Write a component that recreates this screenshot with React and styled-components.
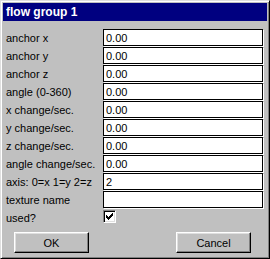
import React from "react";
import styled, { createGlobalStyle } from "styled-components";

const Global = createGlobalStyle`
  html, body { margin: 0; padding: 0; background: #c0c0c0; }
  body { font-family: "Liberation Sans", Arial, sans-serif; }
`;

const Window = styled.div`
  box-sizing: border-box;
  width: 270px;
  height: 259px;
  background: #c0c0c0;
  border: 1px solid;
  border-color: #dfdfdf #000 #000 #dfdfdf;
  box-shadow: inset 1px 1px #fff, inset -1px -1px #808080;
  padding: 2px;
  display: flex;
  flex-direction: column;
`;

const TitleBar = styled.div`
  height: 18px;
  background: #000080;
  color: #fff;
  font: bold 12px "Liberation Sans", Arial, sans-serif;
  display: flex;
  align-items: center;
  padding-left: 3px;
`;

const Form = styled.div`
  display: grid;
  grid-template-columns: 97px 160px;
  grid-auto-rows: 17px;
  row-gap: 1px;
  margin: 8px 0 0 3px;
`;

const Label = styled.label`
  font-size: 11px;
  color: #000;
  display: flex;
  align-items: center;
  white-space: nowrap;
`;

const Field = styled.input`
  box-sizing: border-box;
  width: 160px;
  height: 17px;
  margin: 0;
  border: 1px solid #000;
  box-shadow: 1px 1px 0 #fff;
  background: #fff;
  padding: 0 0 0 2px;
  font: 11px "Liberation Sans", Arial, sans-serif;
  color: #000;
  outline: none;
`;

const CheckCell = styled.div`
  display: flex;
  align-items: flex-start;
  padding-top: 1px;
`;

const CheckBox = styled.div`
  box-sizing: border-box;
  width: 13px;
  height: 13px;
  background: #fff;
  border: 1px solid;
  border-color: #808080 #fff #fff #808080;
  box-shadow: inset 1px 1px #000, inset -1px -1px #dfdfdf;
  display: flex;
  align-items: center;
  justify-content: center;
`;

const Buttons = styled.div`
  display: flex;
  justify-content: space-between;
  padding: 0 16px 0 11px;
  margin-top: 6px;
`;

const Button = styled.button`
  box-sizing: border-box;
  width: 75px;
  height: 21px;
  margin: 0;
  background: #c0c0c0;
  border: 1px solid;
  border-color: #fff #000 #000 #fff;
  box-shadow: inset -1px -1px #808080, inset 1px 1px #dfdfdf;
  font: 11px "Liberation Sans", Arial, sans-serif;
  color: #000;
  padding: 0;
`;

const rows = [
  ["anchor x", "0.00"],
  ["anchor y", "0.00"],
  ["anchor z", "0.00"],
  ["angle (0-360)", "0.00"],
  ["x change/sec.", "0.00"],
  ["y change/sec.", "0.00"],
  ["z change/sec.", "0.00"],
  ["angle change/sec.", "0.00"],
  ["axis: 0=x 1=y 2=z", "2"],
  ["texture name", ""],
];

const checkPixels = [
  [6, 0, 1], [5, 1, 2], [0, 2, 1], [4, 2, 3], [0, 3, 2], [3, 3, 3],
  [0, 4, 5], [1, 5, 3], [2, 6, 1],
];

export default function App() {
  return (
    <>
      <Global />
      <Window>
        <TitleBar>flow group 1</TitleBar>
        <Form>
          {rows.map(([label, value]) => (
            <React.Fragment key={label}>
              <Label>{label}</Label>
              <Field readOnly defaultValue={value} />
            </React.Fragment>
          ))}
          <Label>used?</Label>
          <CheckCell>
            <CheckBox>
              <svg width="7" height="7" viewBox="0 0 7 7" shapeRendering="crispEdges">
                {checkPixels.map(([x, y, w]) => (
                  <rect key={`${x}-${y}`} x={x} y={y} width={w} height="1" fill="#000" />
                ))}
              </svg>
            </CheckBox>
          </CheckCell>
        </Form>
        <Buttons>
          <Button>OK</Button>
          <Button>Cancel</Button>
        </Buttons>
      </Window>
    </>
  );
}
